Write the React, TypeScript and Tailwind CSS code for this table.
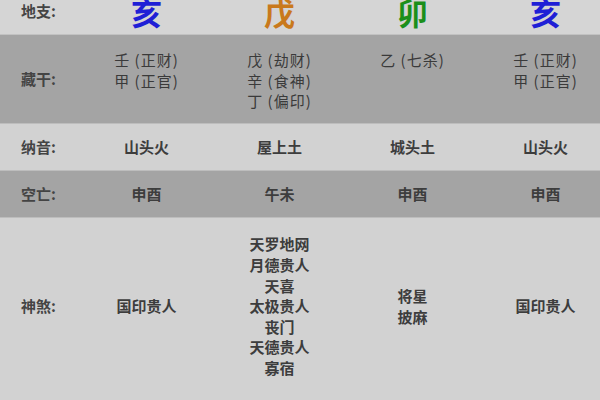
const font = { fontFamily: '"Noto Sans CJK SC", "Noto Sans", sans-serif' }

const branches = [
  { ch: '亥', color: 'text-[#1f1fd6]' },
  { ch: '戊', color: 'text-[#c9791c]' },
  { ch: '卯', color: 'text-[#1b8f1b]' },
  { ch: '亥', color: 'text-[#1f1fd6]' },
]

const hidden = [
  ['壬 (正财)', '甲 (正官)'],
  ['戊 (劫财)', '辛 (食神)', '丁 (偏印)'],
  ['乙 (七杀)'],
  ['壬 (正财)', '甲 (正官)'],
]

const nayin = ['山头火', '屋上土', '城头土', '山头火']
const kongwang = ['申酉', '午未', '申酉', '申酉']
const shensha = [
  ['国印贵人'],
  ['天罗地网', '月德贵人', '天喜', '太极贵人', '丧门', '天德贵人', '寡宿'],
  ['将星', '披麻'],
  ['国印贵人'],
]

const grid = 'grid grid-cols-[80px_133px_133px_133px_133px]'

function Label({ text }: { text: string }) {
  return <div className="flex items-center pl-[21px] text-[15px] font-bold text-[#444]">{text}</div>
}

export default function App() {
  return (
    <div className="h-[400px] w-[600px] overflow-hidden bg-[#d2d2d2]" style={font}>
      <div className="-mt-[12px]">
        <div className={`${grid} h-[47px] bg-[#d5d5d5] border-b border-[#c2c2c2]`}>
          <Label text="地支:" />
          {branches.map((b, i) => (
            <div key={i} className={`flex items-center justify-center text-[31px] font-bold leading-none ${b.color}`}>{b.ch}</div>
          ))}
        </div>
        <div className={`${grid} h-[89px] bg-[#a4a4a4] border-b border-[#bdbdbd]`}>
          <Label text="藏干:" />
          {hidden.map((lines, i) => (
            <div key={i} className="pt-[15px] text-center text-[15px] leading-[20.5px] tracking-[1px] text-[#3a3a3a]">
              {lines.map((l, j) => <div key={j}>{l}</div>)}
            </div>
          ))}
        </div>
        <div className={`${grid} h-[47px] bg-[#d2d2d2] border-b border-[#bdbdbd]`}>
          <Label text="纳音:" />
          {nayin.map((t, i) => (
            <div key={i} className="flex items-center justify-center text-[15px] font-bold text-[#3d3d3d]">{t}</div>
          ))}
        </div>
        <div className={`${grid} h-[47px] bg-[#a4a4a4] border-b border-[#bdbdbd]`}>
          <Label text="空亡:" />
          {kongwang.map((t, i) => (
            <div key={i} className="flex items-center justify-center text-[15px] font-bold text-[#3d3d3d]">{t}</div>
          ))}
        </div>
        <div className={`${grid} h-[177px] bg-[#d2d2d2]`}>
          <Label text="神煞:" />
          {shensha.map((lines, i) => (
            <div key={i} className="flex flex-col items-center justify-center text-[15px] font-bold leading-[20.6px] text-[#3d3d3d]">
              {lines.map((l, j) => <div key={j}>{l}</div>)}
            </div>
          ))}
        </div>
      </div>
    </div>
  )
}
